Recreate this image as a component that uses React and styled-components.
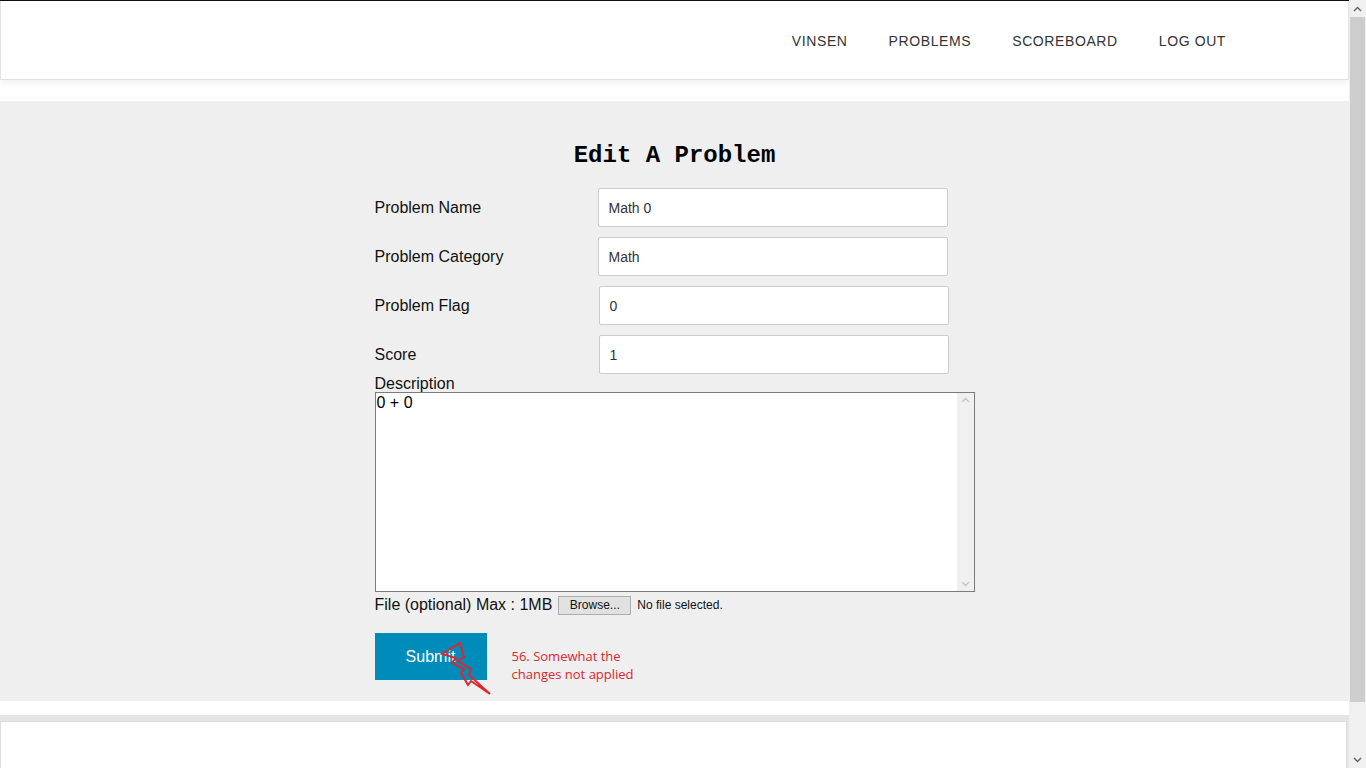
import React from "react";
import styled, { createGlobalStyle } from "styled-components";

const GlobalStyle = createGlobalStyle`
  html, body {
    margin: 0;
    padding: 0;
    height: 100%;
    overflow: hidden;
    background: #ffffff;
  }
  * { box-sizing: border-box; }
`;

const Shell = styled.div`
  display: flex;
  width: 1366px;
  height: 768px;
  overflow: hidden;
`;

const Page = styled.div`
  flex: 1;
  display: flex;
  flex-direction: column;
  border-top: 1px solid #111;
  font-family: "Liberation Sans", Arial, sans-serif;
`;

const Header = styled.header`
  height: 79px;
  background: #fff;
  border: 1px solid #e2e2e2;
  border-top: none;
  box-shadow: 0 2px 8px rgba(0, 0, 0, 0.07);
  display: flex;
  align-items: center;
  justify-content: flex-end;
  padding-right: 102px;
`;

const NavLink = styled.a`
  padding: 0 20px 0 21px;
  font-size: 14px;
  letter-spacing: 0.6px;
  color: #333;
  text-decoration: none;
  margin-top: 2px;
`;

const Section = styled.main`
  margin-top: 21px;
  background: #efefef;
  padding: 43px 0 18px;
  display: flex;
  justify-content: center;
`;

const Column = styled.div`
  width: 600px;
  display: flex;
  flex-direction: column;
`;

const Title = styled.h2`
  margin: 0 0 20px;
  font-family: "Liberation Mono", "Courier New", monospace;
  font-weight: bold;
  font-size: 24px;
  line-height: 24px;
  text-align: center;
  color: #000;
`;

const FieldRow = styled.div`
  display: grid;
  grid-template-columns: ${p => p.labelWidth || 223}px 350px;
  align-items: center;
  height: 39px;
  margin-bottom: ${p => (p.last ? 0 : 10)}px;
`;

const Label = styled.label`
  font-size: 16px;
  color: #111;
`;

const Input = styled.input`
  height: 39px;
  width: 350px;
  border: 1px solid #cccccc;
  border-radius: 2px;
  background: #fff;
  padding: 0 10px;
  font-family: "Liberation Sans", Arial, sans-serif;
  font-size: 14px;
  color: #333;
  outline: none;
`;

const DescLabel = styled.div`
  font-size: 16px;
  line-height: 18px;
  color: #111;
  margin-top: 1px;
  margin-bottom: -1px;
`;

const TextBox = styled.div`
  display: flex;
  height: 200px;
  border: 1px solid #7a7a7a;
  background: #fff;
`;

const TextArea = styled.textarea`
  flex: 1;
  border: none;
  resize: none;
  overflow: hidden;
  padding: 1px;
  font-family: "Liberation Sans", Arial, sans-serif;
  font-size: 16px;
  line-height: 18px;
  color: #000;
  outline: none;
`;

const InnerBar = styled.div`
  width: 17px;
  background: #f0f0f0;
  display: flex;
  flex-direction: column;
  justify-content: space-between;
  align-items: center;
  padding: 4px 0;
`;

const FileLine = styled.div`
  display: flex;
  align-items: center;
  height: 26px;
  font-size: 16px;
  color: #111;
`;

const BrowseButton = styled.button`
  margin-left: 6px;
  height: 19px;
  width: 73px;
  padding: 0;
  background: #e1e1e1;
  border: 1px solid #adadad;
  font-family: "Liberation Sans", Arial, sans-serif;
  font-size: 12px;
  color: #111;
`;

const FileHint = styled.span`
  margin-left: 6px;
  font-size: 12px;
  color: #111;
`;

const SubmitRow = styled.div`
  position: relative;
  display: flex;
  align-items: flex-start;
  margin-top: 15px;
`;

const SubmitButton = styled.button`
  width: 112px;
  height: 47px;
  border: none;
  background: #008cba;
  color: #fff;
  font-family: "Liberation Sans", Arial, sans-serif;
  font-size: 16px;
`;

const Note = styled.div`
  margin: 14px 0 0 25px;
  font-family: "Open Sans", "Noto Sans", sans-serif;
  font-size: 13px;
  line-height: 18px;
  color: #dc2630;
`;

const Scribble = styled.svg`
  position: absolute;
  left: 64px;
  top: 7px;
  overflow: visible;
`;

const Spacer = styled.div`
  height: 14px;
`;

const Footer = styled.footer`
  flex: 1;
  border-top: 6px solid #e5e5e5;
  background: #e5e5e5;
  display: flex;
`;

const FooterCard = styled.div`
  flex: 1;
  margin-right: 2px;
  background: #fff;
  border: 1px solid #dcdcdc;
  border-bottom: none;
`;

const PageBar = styled.div`
  width: 17px;
  background: #f0f0f0;
  display: flex;
  flex-direction: column;
`;

const BarArrow = styled.div`
  height: 17px;
  display: flex;
  align-items: center;
  justify-content: center;
`;

const Thumb = styled.div`
  height: 685px;
  margin: 0 1px;
  background: #cdcdcd;
`;

const Chevron = ({ up, color }) => (
  <svg width="9" height="6" viewBox="0 0 9 6">
    <path
      d={up ? "M1 5 L4.5 1.5 L8 5" : "M1 1 L4.5 4.5 L8 1"}
      fill="none"
      stroke={color}
      strokeWidth="1.4"
    />
  </svg>
);

const fields = [
  { label: "Problem Name", value: "Math 0" },
  { label: "Problem Category", value: "Math" },
  { label: "Problem Flag", value: "0", labelWidth: 224 },
  { label: "Score", value: "1", labelWidth: 224 },
];

export default function App() {
  return (
    <Shell>
      <GlobalStyle />
      <Page>
        <Header>
          <NavLink>VINSEN</NavLink>
          <NavLink>PROBLEMS</NavLink>
          <NavLink>SCOREBOARD</NavLink>
          <NavLink>LOG OUT</NavLink>
        </Header>
        <Section>
          <Column>
            <Title>Edit A Problem</Title>
            {fields.map((f, i) => (
              <FieldRow key={f.label} labelWidth={f.labelWidth} last={i === fields.length - 1}>
                <Label>{f.label}</Label>
                <Input defaultValue={f.value} />
              </FieldRow>
            ))}
            <DescLabel>Description</DescLabel>
            <TextBox>
              <TextArea defaultValue="0 + 0" />
              <InnerBar>
                <Chevron up color="#c4c4c4" />
                <Chevron color="#c4c4c4" />
              </InnerBar>
            </TextBox>
            <FileLine>
              File (optional) Max : 1MB
              <BrowseButton>Browse...</BrowseButton>
              <FileHint>No file selected.</FileHint>
            </FileLine>
            <SubmitRow>
              <SubmitButton>Submit</SubmitButton>
              <Note>
                56. Somewhat the
                <br />
                changes not applied
              </Note>
              <Scribble width="60" height="60">
                <polygon
                  points="3,14 21,3 25,17 19,21 32,29 30,35 51,54 32,41 29,45 22,33 25,29 13,23 17,18"
                  fill="none"
                  stroke="#dc2630"
                  strokeWidth="2"
                  strokeLinejoin="miter"
                />
              </Scribble>
            </SubmitRow>
          </Column>
        </Section>
        <Spacer />
        <Footer>
          <FooterCard />
        </Footer>
      </Page>
      <PageBar>
        <BarArrow>
          <Chevron up color="#606060" />
        </BarArrow>
        <Thumb />
        <div style={{ flex: 1 }} />
        <BarArrow>
          <Chevron color="#606060" />
        </BarArrow>
      </PageBar>
    </Shell>
  );
}
